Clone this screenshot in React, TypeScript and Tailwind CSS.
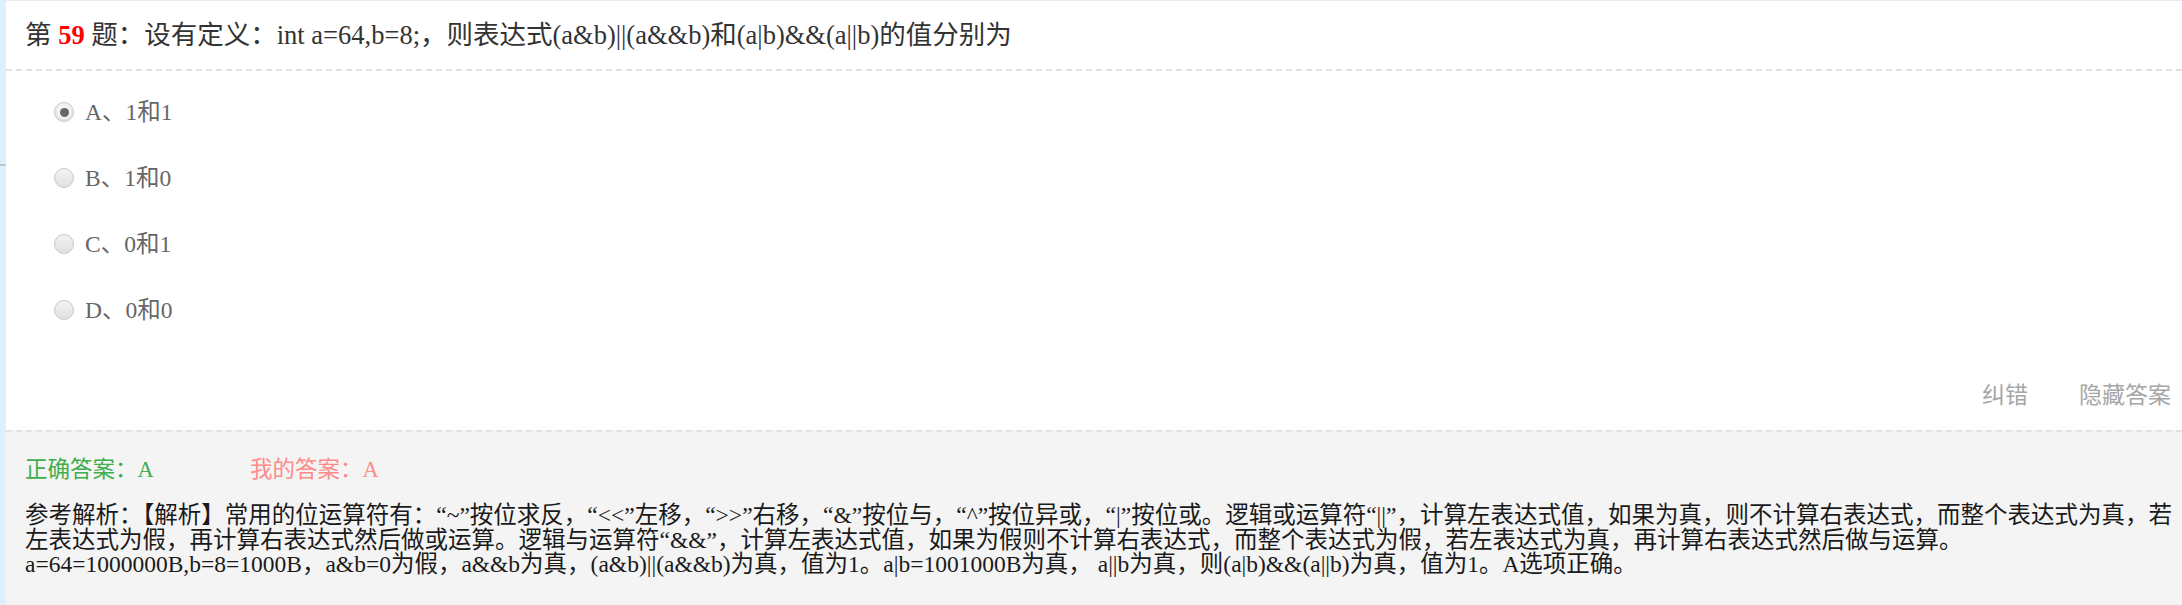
import React from "react";

const FONT = "font-['Liberation_Serif','Noto_Sans_CJK_SC',serif]";

function Radio({ checked }: { checked?: boolean }) {
  return (
    <span className="relative inline-flex h-[20px] w-[20px] shrink-0 items-center justify-center rounded-full border border-[#c9c9c9] bg-gradient-to-b from-[#f2f2f2] to-[#e1e1e1]">
      {checked && (
        <span className="flex h-[14px] w-[14px] items-center justify-center rounded-full bg-[#f4f4f4]">
          <span className="h-[9px] w-[9px] rounded-full bg-[#666]" />
        </span>
      )}
    </span>
  );
}

const options = [
  { k: "A", t: "1和1", checked: true },
  { k: "B", t: "1和0" },
  { k: "C", t: "0和1" },
  { k: "D", t: "0和0" },
];

export default function App() {
  return (
    <div className={`flex h-[605px] w-full bg-[#dff0fd] ${FONT}`}>
      <div className="flex w-[6px] shrink-0 flex-col">
        <div className="h-[164px]" />
        <div className="h-[2px] bg-[#c2c8ce]" />
      </div>
      <div className="flex min-w-0 flex-1 flex-col border-t border-[#e6ecf0] bg-white">
        <div className="flex h-[68px] items-center whitespace-nowrap pl-[19px] text-[26.5px] leading-[30px] text-[#333]">
          <span>
            第 <span className="font-bold text-[#ff0000]">59</span> 题：设有定义：int a=64,b=8;，则表达式(a&amp;b)||(a&amp;&amp;b)和(a|b)&amp;&amp;(a||b)的值分别为
          </span>
        </div>
        <div className="border-b-2 border-dashed border-[#e2e2e2]" />
        <div className="flex flex-col pt-[8px] pl-[48px]">
          {options.map((o) => (
            <div key={o.k} className="flex h-[66px] items-center gap-[11px] text-[23.5px] leading-[28px] text-[#666]">
              <Radio checked={o.checked} />
              <span>
                {o.k}、{o.t}
              </span>
            </div>
          ))}
        </div>
        <div className="mt-[31px] flex h-[38px] items-center justify-end gap-[51px] pr-[11px] text-[23px] leading-[28px] text-[#a6a6a6] font-['Noto_Sans_CJK_SC',sans-serif]">
          <span>纠错</span>
          <span>隐藏答案</span>
        </div>
        <div className="mt-[18px] flex flex-1 flex-col border-t-2 border-dashed border-[#e2e2e2] bg-[#f4f4f4] pl-[19px] pr-[8px]">
          <div className="mt-[25px] flex h-[26px] items-center text-[22.5px]">
            <span className="w-[225px] text-[#3fae4c]">正确答案：A</span>
            <span className="text-[#ff8a8a]">我的答案：A</span>
          </div>
          <div className="mt-[20px] text-[23.5px] leading-[24.5px] text-[#1a1a1a]">
            参考解析：【解析】常用的位运算符有：“~”按位求反，“&lt;&lt;”左移，“&gt;&gt;”右移，“&amp;”按位与，“^”按位异或，“|”按位或。逻辑或运算符“||”，计算左表达式值，如果为真，则不计算右表达式，而整个表达式为真，若左表达式为假，再计算右表达式然后做或运算。逻辑与运算符“&amp;&amp;”，计算左表达式值，如果为假则不计算右表达式，而整个表达式为假，若左表达式为真，再计算右表达式然后做与运算。
            <br />
            a=64=1000000B,b=8=1000B，a&amp;b=0为假，a&amp;&amp;b为真，(a&amp;b)||(a&amp;&amp;b)为真，值为1。a|b=1001000B为真， a||b为真，则(a|b)&amp;&amp;(a||b)为真，值为1。A选项正确。
          </div>
        </div>
      </div>
    </div>
  );
}
